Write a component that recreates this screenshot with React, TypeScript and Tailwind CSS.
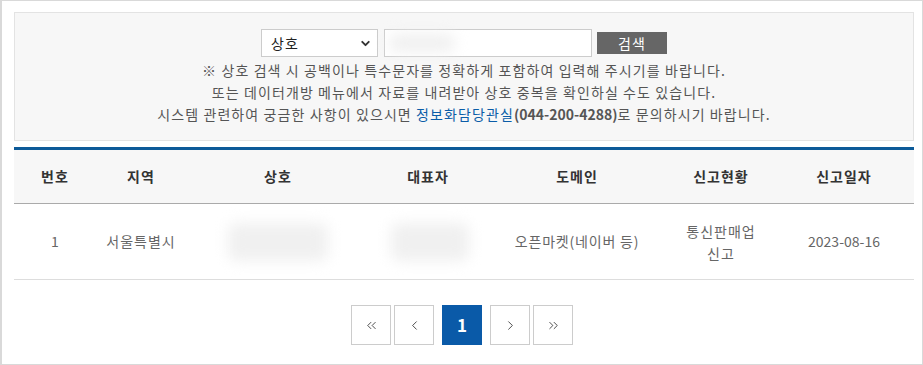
import { ChevronDown, ChevronLeft, ChevronRight, ChevronsLeft, ChevronsRight } from 'lucide-react';

const columns = [
  { label: '번호', w: 'w-[82px]' },
  { label: '지역', w: 'w-[90px]' },
  { label: '상호', w: 'w-[184px]' },
  { label: '대표자', w: 'w-[116px]' },
  { label: '도메인', w: 'w-[182px]' },
  { label: '신고현황', w: 'w-[106px]' },
  { label: '신고일자', w: 'w-[140px]' },
];

function Blurred({ className }: { className: string }) {
  return <div className={`bg-[#f0f0f0] blur-[7px] rounded-lg ${className}`} />;
}

function PageButton({ children, active }: { children: React.ReactNode; active?: boolean }) {
  return (
    <button
      className={`w-10 h-10 flex items-center justify-center text-[17px] font-bold
        ${active ? 'bg-[#0a5aa8] text-white' : 'bg-white border border-[#cccccc] text-black'}`}
    >
      {children}
    </button>
  );
}

export default function App() {
  return (
    <div
      className="w-[923px] h-[365px] border border-l-2 border-[#d9d9d9] bg-white px-3 pt-[11px]"
      style={{ fontFamily: '"Noto Sans CJK KR", "Noto Sans", sans-serif' }}
    >
      {/* Search */}
      <div className="w-[900px] h-[129px] bg-[#f7f7f7] border border-[#e3e3e3] pt-[16px] flex flex-col items-center">
        <div className="flex items-center h-[28px]">
          <div className="w-[117px] h-[28px] bg-white border border-[#cccccc] flex items-center justify-between pl-[9px] pr-[5px] text-[14px] tracking-[1px] text-[#222]">
            <span>상호</span>
            <ChevronDown size={13} strokeWidth={3.5} className="text-[#333]" />
          </div>
          <div className="ml-[6px] w-[208px] h-[28px] bg-white border border-[#cccccc] relative">
            <Blurred className="absolute left-[4px] top-[4px] w-[66px] h-[18px]" />
          </div>
          <button className="ml-[5px] w-[70px] h-[22px] bg-[#666666] text-white text-[14px] tracking-[1px] leading-[22px]">검색</button>
        </div>
        <div className="mt-[2px] text-[14px] tracking-[1.1px] leading-[22px] text-[#555] text-center">
          <p>※ 상호 검색 시 공백이나 특수문자를 정확하게 포함하여 입력해 주시기를 바랍니다.</p>
          <p>또는 데이터개방 메뉴에서 자료를 내려받아 상호 중복을 확인하실 수도 있습니다.</p>
          <p>
            시스템 관련하여 궁금한 사항이 있으시면 <span className="text-[#0b5da8]">정보화담당관실</span>
            <span className="font-semibold tracking-normal">(044-200-4288)</span>로 문의하시기 바랍니다.
          </p>
        </div>
      </div>

      {/* Table */}
      <div className="mt-[6px] w-[900px] border-t-[3px] border-[#0c5a98]">
        <div className="flex h-[54px] bg-[#f7f7f7] border-b border-[#aaaaaa] items-center text-[14px] tracking-[1px] font-semibold text-[#333]">
          {columns.map(c => (
            <div key={c.label} className={`${c.w} text-center`}>{c.label}</div>
          ))}
        </div>
        <div className="flex h-[76px] border-b border-[#dddddd] items-center text-[14px] text-[#666]">
          <div className="w-[82px] text-center">1</div>
          <div className="w-[90px] text-center tracking-[1px]">서울특별시</div>
          <div className="w-[184px] flex justify-center">
            <Blurred className="w-[100px] h-[38px]" />
          </div>
          <div className="w-[116px] flex justify-center pl-[4px]">
            <Blurred className="w-[78px] h-[38px]" />
          </div>
          <div className="w-[182px] text-center tracking-[0.8px]">오픈마켓(네이버 등)</div>
          <div className="w-[106px] text-center leading-[22px] tracking-[1px]">통신판매업<br />신고</div>
          <div className="w-[140px] text-center">2023-08-16</div>
        </div>
      </div>

      {/* Pagination */}
      <div className="mt-[25px] flex justify-center items-center">
        <PageButton><ChevronsLeft size={15} strokeWidth={1.1} /></PageButton>
        <div className="ml-[3px]"><PageButton><ChevronLeft size={15} strokeWidth={1.1} /></PageButton></div>
        <div className="ml-[8px]"><PageButton active>1</PageButton></div>
        <div className="ml-[8px]"><PageButton><ChevronRight size={15} strokeWidth={1.1} /></PageButton></div>
        <div className="ml-[3px]"><PageButton><ChevronsRight size={15} strokeWidth={1.1} /></PageButton></div>
      </div>
    </div>
  );
}
